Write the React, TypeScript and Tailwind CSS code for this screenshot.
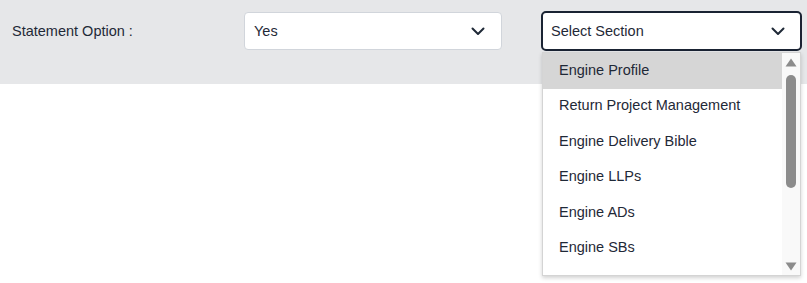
import React from 'react';

const SECTIONS = [
  'Engine Profile',
  'Return Project Management',
  'Engine Delivery Bible',
  'Engine LLPs',
  'Engine ADs',
  'Engine SBs',
];

const Chevron: React.FC = () => (
  <svg width="14" height="9" viewBox="0 0 14 9" fill="none" className="shrink-0">
    <path d="M1.5 1.5 7 7l5.5-5.5" stroke="#1f2937" strokeWidth="2" strokeLinecap="round" strokeLinejoin="round" />
  </svg>
);

export default function App() {
  return (
    <div className="relative w-[807px] h-[283px] bg-white font-['Liberation_Sans',Arial,sans-serif] text-[14.5px] text-[#1f2937]">
      {/* FILTER BAR */}
      <div className="h-[84px] bg-[#e6e7e9] flex items-start pt-3 pl-3">
        <div className="w-[232px] h-[38px] flex items-center pt-[2px]">Statement Option :</div>

        <div className="w-[258px] h-[38px] bg-white border border-[#d1d5db] rounded-[4px] flex items-center justify-between pl-[9px] pr-[16px]">
          <span className="pt-[2px]">Yes</span>
          <Chevron />
        </div>

        <div className="ml-[39px] -mt-px w-[261px] h-[40px] bg-white border-2 border-[#1a2333] rounded-[5px] flex items-center justify-between pl-[8px] pr-[15px]">
          <span className="pt-[2px]">Select Section</span>
          <Chevron />
        </div>
      </div>

      {/* DROPDOWN MENU */}
      <div className="absolute left-[542px] top-[52px] w-[259px] h-[224px] bg-white border border-[#d4d4d4] shadow-[0_2px_4px_rgba(0,0,0,0.18)] flex overflow-hidden">
        <ul className="flex-1">
          {SECTIONS.map((s, i) => (
            <li
              key={s}
              className={`h-[35.5px] flex items-center pl-[16px] ${i === 0 ? 'bg-[#d6d6d6]' : ''}`}
            >
              {s}
            </li>
          ))}
        </ul>

        {/* SCROLLBAR */}
        <div className="w-[18px] bg-[#f9f9f9] flex flex-col items-center pt-[5px] pb-[4px]">
          <svg width="12" height="9" viewBox="0 0 12 9"><path d="M6 0.5 11.5 8.5H0.5Z" fill="#8c8c8c" /></svg>
          <div className="mt-[8px] w-[10px] h-[113px] rounded-[5px] bg-[#8c8c8c]" />
          <div className="flex-1" />
          <svg width="12" height="9" viewBox="0 0 12 9"><path d="M0.5 0.5H11.5L6 8.5Z" fill="#8c8c8c" /></svg>
        </div>
      </div>
    </div>
  );
}
